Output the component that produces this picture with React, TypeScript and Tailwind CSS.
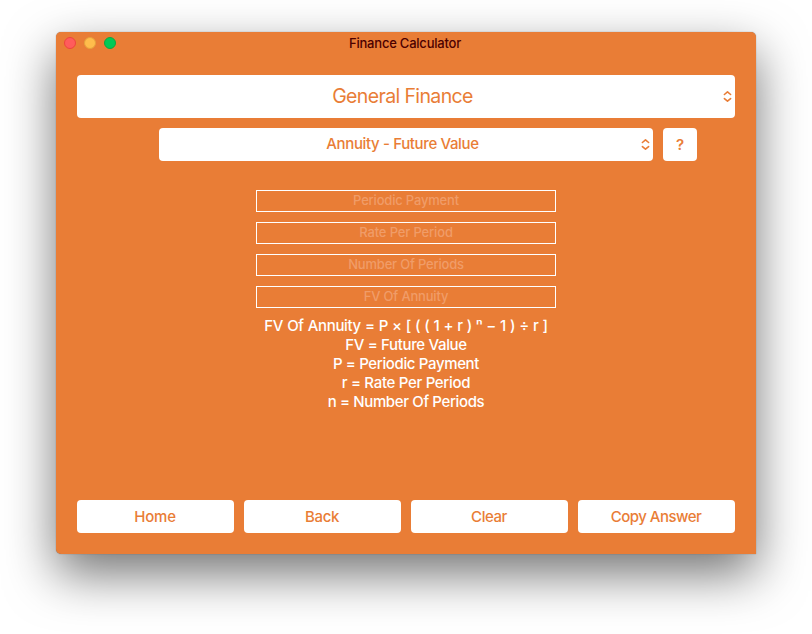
function Chevrons() {
  return (
    <svg width="9" height="13" viewBox="0 0 9 13" fill="none" stroke="#e97d36" strokeWidth="1.6" strokeLinecap="round" strokeLinejoin="round">
      <path d="M1.4 4.5L4.5 1.9L7.6 4.5M1.4 8.6L4.5 11.2L7.6 8.6" />
    </svg>
  );
}

const fields = [
  { label: "Periodic Payment", spacing: "tracking-[-0.19px]" },
  { label: "Rate Per Period", spacing: "tracking-[-0.15px]" },
  { label: "Number Of Periods", spacing: "tracking-[-0.2px]" },
  { label: "FV Of Annuity", spacing: "tracking-[-0.17px]" },
];

const notes = [
  { text: "FV Of Annuity = P × [ ( ( 1 + r ) ⁿ − 1 ) ÷ r ]", spacing: "tracking-[-0.34px] [word-spacing:0.4px]" },
  { text: "FV = Future Value", spacing: "tracking-[-0.34px]" },
  { text: "P = Periodic Payment", spacing: "tracking-[-0.36px]" },
  { text: "r = Rate Per Period", spacing: "tracking-[-0.31px]" },
  { text: "n = Number Of Periods", spacing: "tracking-[-0.37px]" },
];

const actions = [
  { label: "Home", spacing: "tracking-[-0.2px]" },
  { label: "Back", spacing: "tracking-[-0.35px]" },
  { label: "Clear", spacing: "tracking-[-0.45px]" },
  { label: "Copy Answer", spacing: "tracking-[-0.5px]" },
];

export default function App() {
  return (
    <div className="h-[634px] w-[812px] overflow-hidden bg-white px-14 pt-8 font-['Inter','Liberation_Sans',sans-serif] text-[15px] font-medium text-[#e97d36]">
      <main className="flex h-[522px] w-[700px] flex-col rounded-[5px] rounded-br-none bg-[#e97d36] shadow-[0_0_1px_rgba(0,0,0,0.5),0_20px_50px_rgba(0,0,0,0.55)]">
        <header className="grid h-[22px] shrink-0 grid-cols-[1fr_auto_1fr] items-center px-2">
          <div className="flex gap-2">
            <span className="size-3 rounded-full border border-[#ee443f] bg-[#ff5c5c]" />
            <span className="size-3 rounded-full border border-[#e6a23c] bg-[#ffbd4c]" />
            <span className="size-3 rounded-full border border-[#0fa63f] bg-[#00ca56]" />
          </div>
          <h1 className="pr-[2px] text-[13px] leading-5 tracking-[-0.22px] text-[#4c0000]">Finance Calculator</h1>
        </header>

        <div className="mx-[21px] mt-[21px] flex h-[43px] shrink-0 items-center rounded bg-white pl-[5px] pr-[3px]">
          <span className="flex-1 pb-[2px] text-center text-[19.5px] font-normal leading-6 tracking-[-0.63px]">General Finance</span>
          <Chevrons />
        </div>

        <div className="ml-[103px] mt-[10px] flex h-[33px] shrink-0 gap-[10px]">
          <div className="flex w-[494px] items-center rounded bg-white pl-[5px] pr-[3px]">
            <span className="flex-1 pb-px text-center leading-5 tracking-[-0.36px]">Annuity - Future Value</span>
            <Chevrons />
          </div>
          <button className="w-[34px] rounded bg-white font-semibold leading-5">?</button>
        </div>

        <div className="mx-auto mt-[29px] flex w-[300px] flex-col gap-[10px]">
          {fields.map((f) => (
            <div key={f.label} className="h-[22px] border border-white text-center text-[13px] leading-[18px] text-[#f09c68]">
              <span className={f.spacing}>{f.label}</span>
            </div>
          ))}
        </div>

        <div className="mt-[8px] text-center leading-[19px] text-white">
          {notes.map((n) => (
            <p key={n.text} className={n.spacing}>{n.text}</p>
          ))}
        </div>

        <footer className="mx-[21px] mb-[21px] mt-auto grid h-[33px] shrink-0 grid-cols-4 gap-[10px]">
          {actions.map((a) => (
            <button key={a.label} className="rounded bg-white pr-px leading-5">
              <span className={a.spacing}>{a.label}</span>
            </button>
          ))}
        </footer>
      </main>
    </div>
  );
}
